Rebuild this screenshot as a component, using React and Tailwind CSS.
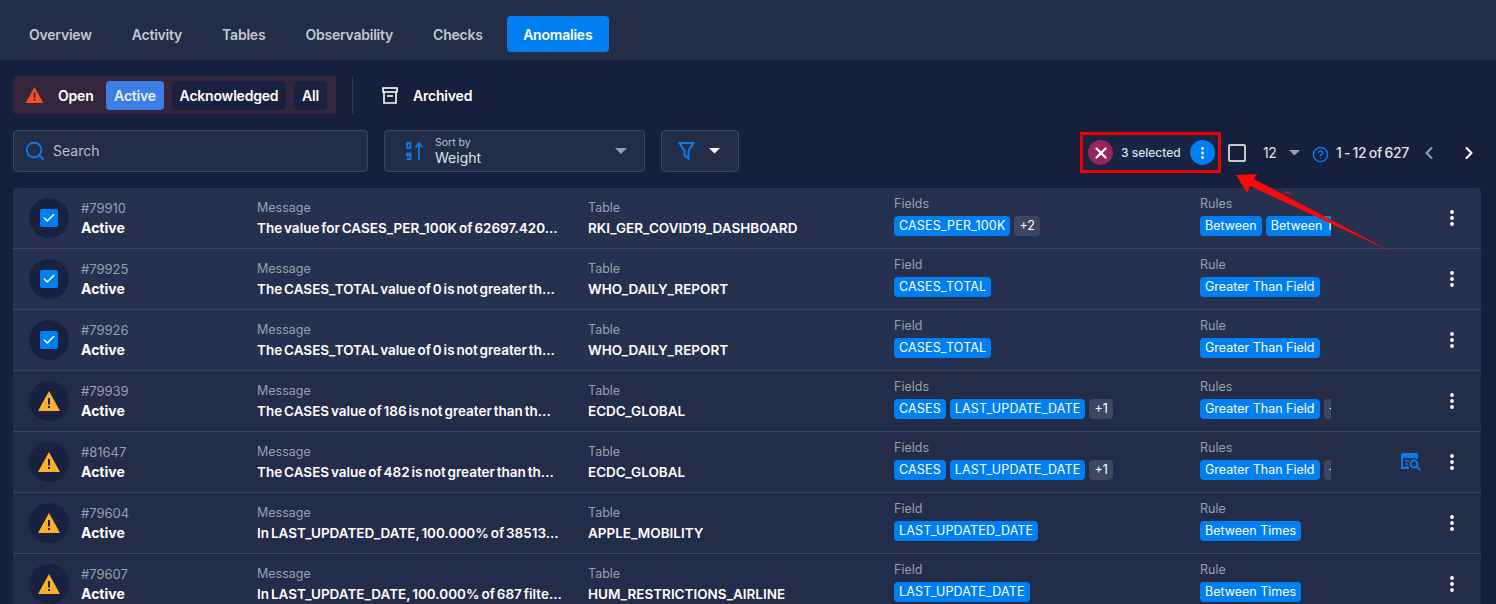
import { Search, ChevronLeft, ChevronRight, X, Check, CircleHelp } from "lucide-react";

const tabs = ["Overview", "Activity", "Tables", "Observability", "Checks", "Anomalies"];

const rows = [
  { id: "#79910", checked: true, message: "The value for CASES_PER_100K of 62697.420...", table: "RKI_GER_COVID19_DASHBOARD", fields: ["CASES_PER_100K"], fieldMore: "+2", rules: ["Between", "Between Times"] },
  { id: "#79925", checked: true, message: "The CASES_TOTAL value of 0 is not greater th...", table: "WHO_DAILY_REPORT", fields: ["CASES_TOTAL"], rules: ["Greater Than Field"] },
  { id: "#79926", checked: true, message: "The CASES_TOTAL value of 0 is not greater th...", table: "WHO_DAILY_REPORT", fields: ["CASES_TOTAL"], rules: ["Greater Than Field"] },
  { id: "#79939", message: "The CASES value of 186 is not greater than th...", table: "ECDC_GLOBAL", fields: ["CASES", "LAST_UPDATE_DATE"], fieldMore: "+1", rules: ["Greater Than Field"], ruleMore: "+1" },
  { id: "#81647", hover: true, message: "The CASES value of 482 is not greater than th...", table: "ECDC_GLOBAL", fields: ["CASES", "LAST_UPDATE_DATE"], fieldMore: "+1", rules: ["Greater Than Field"], ruleMore: "+1" },
  { id: "#79604", message: "In LAST_UPDATED_DATE, 100.000% of 38513...", table: "APPLE_MOBILITY", fields: ["LAST_UPDATED_DATE"], rules: ["Between Times"] },
  { id: "#79607", message: "In LAST_UPDATE_DATE, 100.000% of 687 filte...", table: "HUM_RESTRICTIONS_AIRLINE", fields: ["LAST_UPDATE_DATE"], rules: ["Between Times"] },
];

function Dots({ className }) {
  return (
    <svg width="4" height="16" viewBox="0 0 4 16" className={className} fill="currentColor">
      <circle cx="2" cy="2" r="1.9" />
      <circle cx="2" cy="8" r="1.9" />
      <circle cx="2" cy="14" r="1.9" />
    </svg>
  );
}

function Caret({ className, w = 12 }) {
  return (
    <svg width={w} height={w / 2} viewBox="0 0 12 6" className={className} fill="currentColor">
      <path d="M0 0h12L6 6z" />
    </svg>
  );
}

function WarnIcon({ color, w = 22, h = 20 }) {
  return (
    <svg width={w} height={h} viewBox="0 0 22 20">
      <path d="M11 0 22 20H0z" fill={color} />
      <rect x="10" y="7" width="2" height="6.5" fill="#1a2340" />
      <rect x="10" y="15" width="2" height="2" fill="#1a2340" />
    </svg>
  );
}

function ArchiveIcon() {
  return (
    <svg width="16" height="17" viewBox="0 0 16 17" fill="none" stroke="white" strokeWidth="1.6">
      <rect x="1" y="1" width="14" height="4" />
      <path d="M2 5v11h12V5" />
      <path d="M5 9h6" />
    </svg>
  );
}

function SortIcon() {
  return (
    <svg width="18" height="18" viewBox="0 0 18 18" fill="none" stroke="#0a7cf0">
      <rect x="1" y="1" width="3.4" height="5" strokeWidth="1.8" />
      <rect x="1" y="11.5" width="3.4" height="2.2" strokeWidth="1.8" />
      <path d="M4.4 13.7V17H1" strokeWidth="1.8" />
      <path d="M13 18V2M9.5 5.5 13 1l3.5 4.5" strokeWidth="1.8" />
    </svg>
  );
}

function FilterIcon() {
  return (
    <svg width="17" height="18" viewBox="0 0 17 18" fill="none" stroke="#0a7cf0" strokeWidth="2">
      <path d="M1.5 1h14l-5 8v7.5l-4-3V9z" />
    </svg>
  );
}

function EqSearchIcon() {
  return (
    <svg width="21" height="18" viewBox="0 0 21 18" fill="none" stroke="#0a7cf0" strokeWidth="2">
      <path d="M0 2a2 2 0 0 1 2-2h13a2 2 0 0 1 2 2v3H0z" fill="#0a7cf0" stroke="none" />
      <path d="M1 4v11h7M16 4v2" />
      <path d="M4 8h4M4 11h3M4 14h3" strokeWidth="1.6" />
      <circle cx="13" cy="11" r="3.4" />
      <path d="m15.5 13.5 4 4" />
    </svg>
  );
}

function FieldTag({ children }) {
  return (
    <span className="shrink-0 h-5 px-[5px] flex items-center rounded-[4px] bg-[#007ff0] text-white text-[12.5px] tracking-[0.15px] leading-none whitespace-nowrap">
      {children}
    </span>
  );
}

function RuleTag({ children }) {
  return (
    <span className="shrink-0 h-5 px-[5px] flex items-center rounded-[4px] bg-[#007ff0] text-white text-[12.5px] leading-none whitespace-nowrap">
      {children}
    </span>
  );
}

function More({ children }) {
  return (
    <span className="shrink-0 h-5 px-[5px] flex items-center rounded-[4px] bg-[#3d4761] text-white text-[12.5px] leading-none">
      {children}
    </span>
  );
}

function TagCell({ label, children }) {
  return (
    <div className="min-w-0 pb-1">
      <div className="text-[12.5px] leading-4 text-[#9a9fae]">{label}</div>
      <div className="flex gap-1 mt-1 overflow-hidden">{children}</div>
    </div>
  );
}

function TextCell({ label, children }) {
  return (
    <div className="min-w-0 pt-[2px]">
      <div className="text-[12.5px] leading-4 text-[#9a9fae]">{label}</div>
      <div className="mt-[2px] text-[13.5px] leading-5 font-semibold text-white whitespace-nowrap [word-spacing:-1.5px]">
        {children}
      </div>
    </div>
  );
}

function Row({ row }) {
  const bg = row.checked ? "bg-[#26314f]" : "bg-[#232c48]";
  return (
    <div className={"h-[61px] border-b border-[#3a4560] pl-4 grid grid-cols-[228px_331px_306px_306px_131px_1fr] items-center " + bg}>
      <div className="flex items-center gap-3">
        <div className="w-10 h-10 rounded-full bg-[#182240] flex items-center justify-center">
          {row.checked ? (
            <span className="w-[18px] h-[18px] rounded-[2px] bg-[#007ff0] flex items-center justify-center">
              <Check size={14} strokeWidth={2.5} className="text-white" />
            </span>
          ) : (
            <WarnIcon color="#fbb02a" />
          )}
        </div>
        <div className="pt-[2px]">
          <div className="text-[13px] leading-4 text-[#9a9fae]">{row.id}</div>
          <div className="mt-[2px] text-sm leading-5 font-bold text-white">Active</div>
        </div>
      </div>
      <TextCell label="Message">{row.message}</TextCell>
      <TextCell label="Table">{row.table}</TextCell>
      <TagCell label={row.fields.length + (row.fieldMore ? 1 : 0) > 1 ? "Fields" : "Field"}>
        {row.fields.map((f) => (
          <FieldTag key={f}>{f}</FieldTag>
        ))}
        {row.fieldMore && <More>{row.fieldMore}</More>}
      </TagCell>
      <TagCell label={row.rules.length + (row.ruleMore ? 1 : 0) > 1 ? "Rules" : "Rule"}>
        {row.rules.map((r) => (
          <RuleTag key={r}>{r}</RuleTag>
        ))}
        {row.ruleMore && <More>{row.ruleMore}</More>}
      </TagCell>
      <div className="flex items-center justify-end pr-[27px] gap-[28px]">
        {row.hover && <EqSearchIcon />}
        <Dots className="text-white" />
      </div>
    </div>
  );
}

export default function App() {
  return (
    <div className="relative h-[604px] overflow-hidden bg-[#161f3b] font-['Inter',sans-serif] text-white">
      <nav className="h-[60px] bg-[#232d48] pl-[9px] pt-4 flex items-start">
        {tabs.map((t) => (
          <button
            key={t}
            className={
              t === "Anomalies"
                ? "ml-1 h-9 w-[102px] pt-px rounded-[4px] bg-[#007ff0] text-white text-sm font-semibold tracking-[-0.22px]"
                : "h-9 px-5 pt-px text-[#c3c6cf] text-sm font-semibold tracking-[-0.22px]"
            }
          >
            {t}
          </button>
        ))}
      </nav>

      <div className="px-[13px] mt-4 flex items-center h-[38px]">
        <div className="h-[38px] w-[323px] rounded-[4px] bg-[#33263c] flex items-center pl-3 text-sm font-semibold tracking-[-0.2px]">
          <WarnIcon color="#f4511e" w={19} h={16} />
          <span className="ml-[14px] pt-px w-[48px]">Open</span>
          <span className="w-[58px] h-[29px] pt-px rounded-[4px] bg-[#3a7ee6] flex items-center justify-center text-[#e8eefc]">Active</span>
          <span className="ml-2 w-[114px] h-[29px] pt-px rounded-[4px] bg-[#182240] flex items-center justify-center">Acknowledged</span>
          <span className="ml-2 w-[33px] h-[29px] pt-px rounded-[4px] bg-[#182240] flex items-center justify-center">All</span>
        </div>
        <div className="ml-[16px] w-px h-[38px] bg-[#323b55]" />
        <span className="ml-[29px]"><ArchiveIcon /></span>
        <span className="ml-[15px] pt-px text-sm font-semibold tracking-[-0.2px]">Archived</span>
      </div>

      <div className="pl-[13px] pr-[15px] mt-4 h-[42px] flex items-start">
        <div className="w-[355px] h-[42px] rounded-[4px] border border-[#3a4560] bg-[#232d48] flex items-center pl-[10px] gap-[7px]">
          <Search size={22} className="text-[#0a7cf0]" />
          <span className="pb-px text-sm text-[#b9bdc9]">Search</span>
        </div>
        <div className="ml-[16px] w-[261px] h-[42px] rounded-[4px] border border-[#3a4560] bg-[#232d48] flex items-center pl-[21px] pr-[17px]">
          <SortIcon />
          <div className="ml-[11px] flex-1">
            <div className="text-[10.5px] leading-[13px] text-[#b9bdc9]">Sort by</div>
            <div className="text-sm leading-[17px] text-[#dfe1e7]">Weight</div>
          </div>
          <Caret className="text-[#9a9fae]" />
        </div>
        <div className="ml-[16px] w-[78px] h-[42px] rounded-[4px] border border-[#3a4560] bg-[#232d48] flex items-center pl-4 gap-[14px]">
          <FilterIcon />
          <Caret w={11} className="text-white" />
        </div>

        <div className="ml-auto mt-[2px] mr-[2px] flex items-center">
          <div className="w-[141px] h-[41px] border-[3px] border-[#f00000] bg-[#182444] flex items-center pl-[5px] pr-[3px]">
            <span className="w-[25px] h-[25px] rounded-full bg-[#98245c] flex items-center justify-center">
              <X size={18} strokeWidth={3} className="text-white" />
            </span>
            <span className="ml-2 text-xs font-medium text-[#dfe1e7] whitespace-nowrap">3 selected</span>
            <span className="ml-auto w-[25px] h-[25px] rounded-full bg-[#007ff0] flex items-center justify-center">
              <Dots className="text-white w-[3px] h-[12px]" />
            </span>
          </div>
          <span className="ml-[7px] w-[18px] h-[18px] border-2 border-[#c8cad0] rounded-[2px]" />
          <span className="ml-[17px] w-[14px] text-sm text-[#dfe1e7] tracking-[-0.5px]">12</span>
          <Caret w={11} className="ml-3 text-[#9a9fae]" />
          <CircleHelp size={17} className="ml-3 mt-1 text-[#0a7cf0]" />
          <span className="ml-[7px] w-[73px] text-sm font-medium text-[#dfe1e7] tracking-[-0.3px] [word-spacing:-1px] whitespace-nowrap">1 - 12 of 627</span>
          <ChevronLeft size={20} strokeWidth={2.5} className="ml-[10px] text-[#9a9fae]" />
          <ChevronRight size={20} strokeWidth={2.5} className="ml-5 text-white" />
        </div>
      </div>

      <div className="mt-4 ml-[13px] mr-[15px] rounded-t-[4px] overflow-hidden">
        {rows.map((row) => (
          <Row key={row.id} row={row} />
        ))}
      </div>

      {/* red annotation arrow */}
      <svg className="absolute left-0 top-0 pointer-events-none" width="1496" height="604" fill="#f60a0a">
        <path d="M1236 175 1257 174 1254 179 1392 252 1250 186 1247 193z" />
        <path d="M1282 193 1287 191 1295 195z" opacity=".6" />
      </svg>
    </div>
  );
}
